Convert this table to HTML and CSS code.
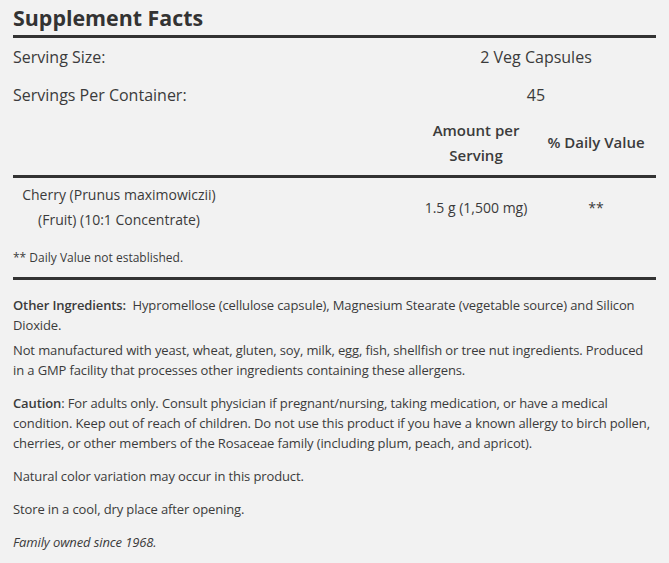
FILE: index.html
```html
<!DOCTYPE html>
<html>
<head>
<meta charset="utf-8">
<link rel="stylesheet" href="styles.css">
</head>
<body>
<div class="facts">
  <h2 class="title">Supplement Facts</h2>
  <div class="table">
    <div class="row serving">
      <div class="label">Serving Size:</div>
      <div class="value">2 Veg Capsules</div>
    </div>
    <div class="row serving">
      <div class="label">Servings Per Container:</div>
      <div class="value">45</div>
    </div>
    <div class="row head">
      <div></div>
      <div class="col">Amount per<br>Serving</div>
      <div class="col">% Daily Value</div>
    </div>
    <div class="row item">
      <div class="name">Cherry (Prunus maximowiczii) (Fruit) (10:1 Concentrate)</div>
      <div class="col">1.5 g (1,500 mg)</div>
      <div class="col">**</div>
    </div>
    <div class="note">** Daily Value not established.</div>
  </div>
  <div class="info">
    <p class="tight"><b>Other Ingredients:</b>&nbsp; Hypromellose (cellulose capsule), Magnesium Stearate (vegetable source) and Silicon Dioxide.</p>
    <p>Not manufactured with yeast, wheat, gluten, soy, milk, egg, fish, shellfish or tree nut ingredients. Produced in a GMP facility that processes other ingredients containing these allergens.</p>
    <p><b>Caution</b>: For adults only. Consult physician if pregnant/nursing, taking medication, or have a medical condition. Keep out of reach of children. Do not use this product if you have a known allergy to birch pollen, cherries, or other members of the Rosaceae family (including plum, peach, and apricot).</p>
    <p>Natural color variation may occur in this product.</p>
    <p>Store in a cool, dry place after opening.</p>
    <p><i>Family owned since 1968.</i></p>
  </div>
</div>
</body>
</html>
```
FILE: styles.css
```css
html, body {
  margin: 0;
  padding: 0;
  background: #f2f2f2;
}
body {
  font-family: "Open Sans", "Lato", sans-serif;
  color: #3b3b3b;
}
.facts {
  width: 643px;
  padding: 0 13px;
}
.title {
  margin: 0;
  padding-top: 3px;
  font-size: 21.4px;
  line-height: 30px;
  font-weight: 700;
  color: #333;
  border-bottom: 3px solid #333;
  padding-bottom: 2px;
}
.row {
  display: grid;
  grid-template-columns: 1fr 120px 120px;
  align-items: center;
}
.serving {
  height: 38px;
  font-size: 16px;
}
.serving .label {
  font-weight: 500;
}
.serving .value {
  grid-column: 2 / 4;
  text-align: center;
}
.head {
  height: 57px;
  padding-bottom: 4px;
  font-size: 15px;
  font-weight: 600;
  line-height: 25px;
  border-bottom: 3px solid #333;
}
.col {
  text-align: center;
}
.item {
  font-size: 14px;
  line-height: 25px;
  padding: 4px 0;
}
.name {
  width: 212px;
  text-align: center;
}
.note {
  font-size: 12px;
  line-height: 20px;
  padding: 12px 0 9px;
  border-bottom: 3px solid #333;
}
.info {
  font-size: 13px;
  line-height: 20px;
  letter-spacing: -0.12px;
  padding-top: 15px;
}
.info p {
  margin: 0 0 13px;
}
.info p.tight {
  margin-bottom: 5px;
}
.info b {
  font-weight: 600;
}
```
